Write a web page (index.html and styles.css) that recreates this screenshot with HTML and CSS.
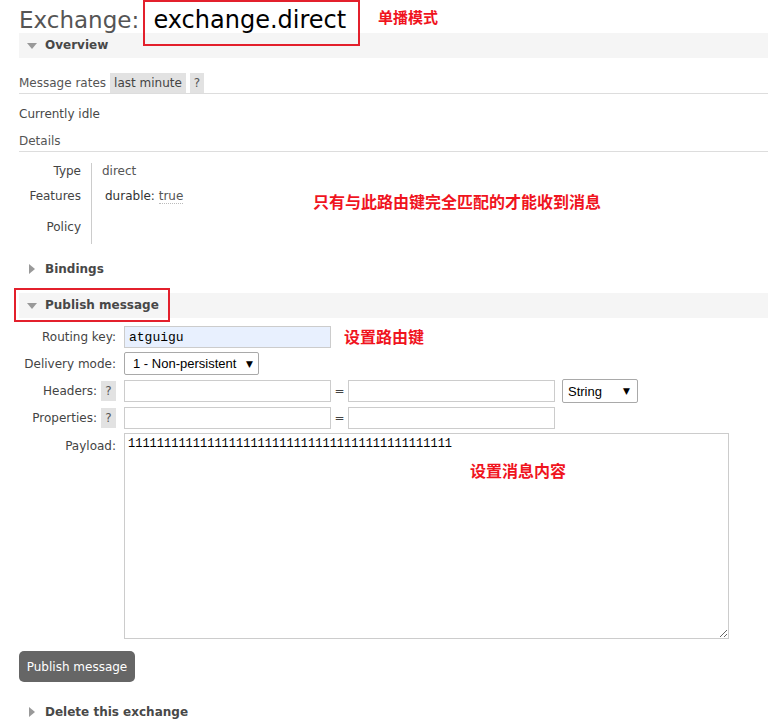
FILE: index.html
```html
<!DOCTYPE html>
<html>
<head>
<meta charset="utf-8">
<link rel="stylesheet" href="styles.css">
</head>
<body>
<div class="page">
  <h1 class="title">Exchange: <b class="name">exchange.direct</b></h1>

  <section class="sec">
    <h2 class="sec-h"><span class="tri down"></span>Overview</h2>
    <div class="rates">
      <span class="rates-l">Message rates</span>
      <span class="pill">last minute</span>
      <span class="pill q">?</span>
    </div>
    <p class="idle">Currently idle</p>
    <h3 class="sub">Details</h3>
    <table class="facts">
      <tr class="r1"><th>Type</th><td>direct</td></tr>
      <tr class="r2"><th>Features</th><td><span class="feat">durable: <abbr class="val">true</abbr></span></td></tr>
      <tr class="r3"><th>Policy</th><td></td></tr>
    </table>
  </section>

  <section class="sec closed">
    <h2 class="sec-h"><span class="tri right"></span>Bindings</h2>
  </section>

  <section class="sec publish">
    <h2 class="sec-h"><span class="tri down"></span>Publish message</h2>
    <form class="form">
      <label class="lbl">Routing key:</label>
      <div class="ctl"><input class="in key" type="text" value="atguigu"></div>

      <label class="lbl">Delivery mode:</label>
      <div class="ctl"><span class="sel w-mode"><select><option>1 - Non-persistent</option></select></span></div>

      <label class="lbl">Headers:<span class="help">?</span></label>
      <div class="ctl"><input class="in" type="text"><span class="eq">=</span><input class="in" type="text"><span class="sel w-type"><select><option>String</option></select></span></div>

      <label class="lbl">Properties:<span class="help">?</span></label>
      <div class="ctl"><input class="in" type="text"><span class="eq">=</span><input class="in" type="text"></div>

      <label class="lbl top">Payload:</label>
      <div class="ctl"><textarea class="payload">111111111111111111111111111111111111111111111</textarea></div>
    </form>
    <button class="btn" type="button">Publish message</button>
  </section>

  <section class="sec closed last">
    <h2 class="sec-h"><span class="tri right"></span>Delete this exchange</h2>
  </section>

  <div class="mark box1"></div>
  <div class="mark box2"></div>
  <div class="note n1">单播模式</div>
  <div class="note n2">只有与此路由键完全匹配的才能收到消息</div>
  <div class="note n3">设置路由键</div>
  <div class="note n4">设置消息内容</div>
</div>
</body>
</html>
```

FILE: styles.css
```css
html, body {
  margin: 0;
  padding: 0;
  background: #fff;
}
body {
  font: 12px/16px "DejaVu Sans", Verdana, sans-serif;
  color: #484848;
}
.page {
  position: relative;
  padding-left: 19px;
  overflow: hidden;
}
.title {
  margin: 0;
  height: 26px;
  padding-top: 7px;
  font-size: 23px;
  line-height: 26px;
  font-weight: normal;
  color: #555;
}
.title .name {
  font-weight: normal;
  font-size: 24px;
  color: #000;
  margin-left: 7px;
}
.sec-h {
  position: relative;
  margin: 0;
  height: 25px;
  line-height: 25px;
  padding-left: 26px;
  font-size: 12px;
  font-weight: bold;
  color: #484848;
  background: #f5f5f5;
}
.closed .sec-h {
  background: transparent;
}
.sec.closed {
  margin-top: 13px;
}
.sec.publish {
  margin-top: 11px;
}
.sec.last {
  margin-top: 18px;
}
.tri {
  position: absolute;
  width: 0;
  height: 0;
}
.tri.down {
  left: 8px;
  top: 10px;
  border-left: 5px solid transparent;
  border-right: 5px solid transparent;
  border-top: 6px solid #999;
}
.tri.right {
  left: 10px;
  top: 7px;
  border-top: 5px solid transparent;
  border-bottom: 5px solid transparent;
  border-left: 6px solid #999;
}
.rates {
  margin-top: 15px;
  height: 20px;
  display: flex;
  align-items: center;
  border-bottom: 1px solid #ddd;
  color: #555;
}
.rates-l {
  margin-right: 4px;
}
.pill {
  background: #e2e2e2;
  line-height: 20px;
  padding: 0 4px;
  color: #444;
  margin-right: 4px;
}
.pill.q {
  padding: 0 4px;
  color: #555;
}
.idle {
  margin: 12px 0 0;
  color: #484848;
}
.sub {
  margin: 11px 0 0;
  font-size: 12px;
  font-weight: normal;
  color: #555;
  padding-bottom: 2px;
  border-bottom: 1px solid #ddd;
}
.facts {
  margin-top: 11px;
  border-collapse: collapse;
}
.facts th {
  width: 52px;
  text-align: right;
  font-weight: normal;
  color: #444;
  padding: 0 10px 9px;
  border-right: 1px solid #ccc;
  vertical-align: top;
}
.facts td {
  padding: 0 10px 9px;
  vertical-align: top;
  color: #555;
}
.facts .r2 th, .facts .r2 td {
  padding-bottom: 15px;
}
.feat {
  padding-left: 3px;
  color: #333;
}
.val {
  text-decoration: none;
  border-bottom: 1px dotted #bbb;
  color: #555;
}
.form {
  margin-top: 8px;
  display: grid;
  grid-template-columns: 97px auto;
  column-gap: 8px;
  row-gap: 4px;
  align-items: center;
}
.lbl {
  display: flex;
  justify-content: flex-end;
  align-items: center;
  color: #444;
}
.lbl.top {
  align-self: start;
  padding-top: 5px;
}
.help {
  margin-left: 4px;
  width: 15px;
  height: 20px;
  line-height: 20px;
  text-align: center;
  background: #e2e2e2;
  color: #555;
}
.ctl {
  display: flex;
  align-items: center;
}
.in {
  box-sizing: border-box;
  width: 207px;
  height: 22px;
  margin: 0;
  border: 1px solid #ccc;
  padding: 1px 4px;
  font: 13px "Liberation Mono", monospace;
  color: #000;
  background: #fff;
}
.in.key {
  background: #e8f0fe;
}
.eq {
  width: 17px;
  text-align: center;
  color: #444;
}
.sel {
  position: relative;
  display: inline-block;
}
.sel select {
  appearance: none;
  -webkit-appearance: none;
  box-sizing: border-box;
  width: 100%;
  margin: 0;
  border: 1px solid #a9a9a9;
  border-radius: 2px;
  background: #fff;
  font: 13px "Liberation Sans", Arial, sans-serif;
  color: #000;
  padding: 0 0 0 8px;
}
.sel::after {
  content: "▼";
  position: absolute;
  right: 6px;
  top: 50%;
  transform: translateY(-50%);
  font: 9px "DejaVu Sans", sans-serif;
  color: #000;
  pointer-events: none;
}
.w-mode {
  width: 135px;
}
.w-mode select {
  height: 23px;
}
.w-type {
  width: 76px;
  margin-left: 7px;
}
.w-type select {
  height: 24px;
  padding-left: 5px;
}
.w-type::after {
  right: 8px;
}
.payload {
  box-sizing: border-box;
  width: 605px;
  height: 206px;
  margin: 0;
  border: 1px solid #ccc;
  padding: 3px 3px;
  font: 12px/14px "Liberation Mono", monospace;
  color: #000;
}
.btn {
  display: block;
  margin-top: 12px;
  width: 116px;
  height: 31px;
  border: 0;
  border-radius: 5px;
  background: #666;
  color: #fff;
  font: 12px "DejaVu Sans", Verdana, sans-serif;
  padding: 0;
}
.mark {
  position: absolute;
  box-sizing: border-box;
  border: 2px solid #e3202c;
}
.box1 {
  left: 143px;
  top: 0;
  width: 217px;
  height: 46px;
}
.box2 {
  left: 14px;
  top: 288px;
  width: 156px;
  height: 34px;
}
.note {
  position: absolute;
  font: bold 16px/16px "Noto Sans CJK SC", sans-serif;
  color: #f0141e;
  white-space: nowrap;
}
.n1 { left: 378px; top: 9px; font-size: 15px; }
.n2 { left: 313px; top: 193px; }
.n3 { left: 344px; top: 328px; }
.n4 { left: 470px; top: 462px; }
```
